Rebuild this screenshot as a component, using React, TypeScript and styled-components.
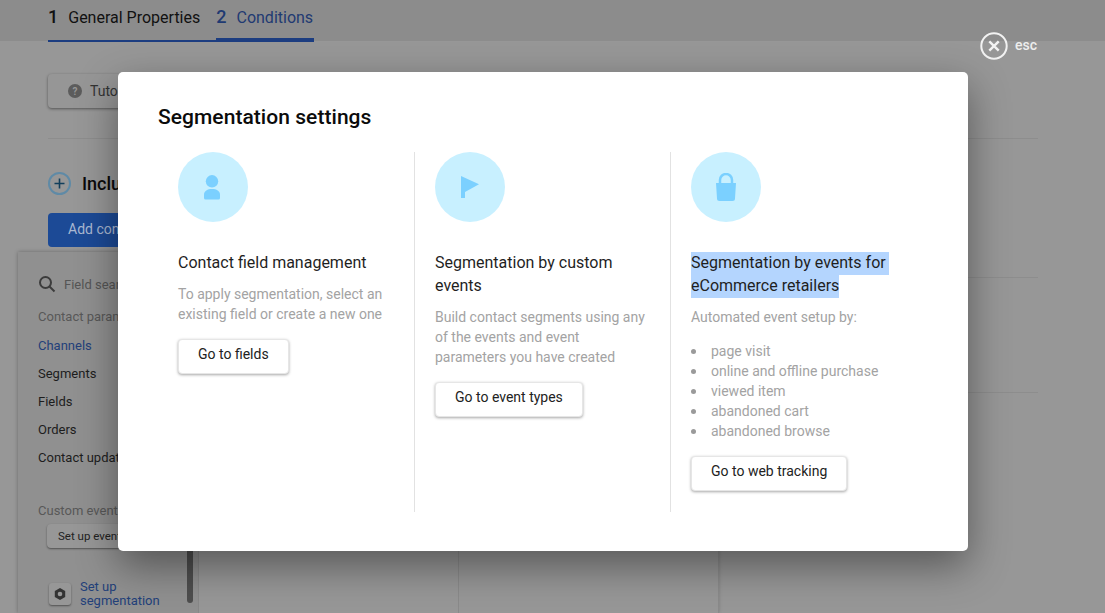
import React from "react";
import styled, { createGlobalStyle } from "styled-components";

const Global = createGlobalStyle`
  html, body { margin: 0; padding: 0; height: 100%; overflow: hidden; background: #979797; }
  body { font-family: Roboto, "Liberation Sans", sans-serif; }
  #root { height: 100%; }
`;

const Page = styled.div`
  position: relative;
  width: 1105px;
  height: 613px;
  overflow: hidden;
  background: #979797;
  color: #0e0e0e;
`;

const Header = styled.header`
  height: 41px;
  background: #8c8c8c;
  padding-left: 48px;
  box-sizing: border-box;
  display: flex;
`;

const Step = styled.div<{ $active?: boolean }>`
  height: 42px;
  box-sizing: border-box;
  display: flex;
  align-items: baseline;
  gap: 10px;
  padding-top: 5px;
  padding-right: ${(p) => (p.$active ? "1px" : "16px")};
  font-size: 16px;
  line-height: 24px;
  color: ${(p) => (p.$active ? "#1f3a72" : "#111")};
  border-bottom: ${(p) => (p.$active ? "4px" : "2px")} solid #1c3d80;
  b { font-size: 18px; font-weight: 500; }
`;

const Body = styled.main`
  padding: 33px 67px 0 48px;
`;

const Tutorial = styled.div`
  width: 140px;
  height: 34px;
  box-sizing: border-box;
  border-radius: 4px;
  background: #969696;
  box-shadow: 0 1px 3px rgba(0, 0, 0, 0.45);
  display: flex;
  align-items: center;
  gap: 8px;
  padding-left: 20px;
  font-size: 14px;
  color: #333;
`;

const Rule = styled.div`
  height: 1px;
  margin-top: 30px;
  background: #8d8d8d;
`;

const IncludeRow = styled.div`
  margin-top: 33px;
  display: flex;
  align-items: center;
  gap: 11px;
  font-size: 18px;
  font-weight: 500;
  color: #0a0a0a;
`;

const AddButton = styled.div`
  margin-top: 18px;
  width: 160px;
  height: 34px;
  border-radius: 4px;
  background: #1c4a96;
  color: #a9b8d2;
  font-size: 14px;
  display: flex;
  align-items: center;
  padding: 0 0 3px 20px;
  box-sizing: border-box;
`;

const Workspace = styled.section`
  position: absolute;
  left: 18px;
  top: 252px;
  width: 700px;
  height: 361px;
  display: flex;
  background: #979797;
  box-shadow: 0 0 4px rgba(0, 0, 0, 0.3);
`;

const Sidebar = styled.aside`
  position: relative;
  width: 180px;
  flex: none;
  box-sizing: border-box;
  padding: 23px 0 0 20px;
  background: #909090;
  font-size: 13px;
`;

const Search = styled.div`
  display: flex;
  align-items: center;
  gap: 8px;
  height: 18px;
  color: #555;
  font-size: 13px;
`;

const Muted = styled.div`
  margin-top: 15px;
  font-size: 13px;
  line-height: 18px;
  color: #585858;
`;

const NavItem = styled.div<{ $active?: boolean }>`
  margin-top: 10px;
  line-height: 18px;
  color: ${(p) => (p.$active ? "#23407a" : "#1d1d1d")};
  &:nth-child(3) { margin-top: 11px; }
`;

const EventsLabel = styled(Muted)`
  margin-top: 35px;
`;

const SetupEvents = styled.div`
  margin: 4px 0 0 9px;
  width: 110px;
  height: 24px;
  box-sizing: border-box;
  padding-left: 11px;
  display: flex;
  align-items: center;
  border-radius: 4px;
  background: #979797;
  box-shadow: 0 1px 2px rgba(0, 0, 0, 0.45);
  font-size: 11.5px;
  color: #222;
`;

const SetupRow = styled.div`
  margin: 32px 0 0 11px;
  display: flex;
  align-items: center;
  gap: 9px;
  color: #23407a;
  font-size: 13px;
  line-height: 14px;
`;

const GearBox = styled.div`
  width: 22px;
  height: 22px;
  border-radius: 3px;
  display: flex;
  align-items: center;
  justify-content: center;
  background: #979797;
  box-shadow: 0 1px 2px rgba(0, 0, 0, 0.45);
`;

const Scrollbar = styled.div`
  position: absolute;
  right: 5px;
  top: 268px;
  width: 6px;
  height: 83px;
  border-radius: 3px;
  background: #4e4e4e;
`;

const Columns = styled.div`
  flex: 1;
  display: grid;
  grid-template-columns: 260px 260px;
  border-left: 1px solid #888;
`;

const Column = styled.div`
  border-right: 1px solid #8a8a8a;
`;

const SideLine = styled.div<{ $top: number }>`
  position: absolute;
  left: 960px;
  top: ${(p) => p.$top}px;
  width: 78px;
  height: 1px;
  background: #8d8d8d;
`;

const Close = styled.div`
  position: absolute;
  left: 980px;
  top: 32px;
  display: flex;
  align-items: center;
  gap: 7px;
  color: #ededed;
  font-size: 14px;
  font-weight: 500;
`;

const CloseLabel = styled.span`
  margin-bottom: 2px;
`;

const Modal = styled.div`
  position: absolute;
  left: 118px;
  top: 72px;
  width: 850px;
  height: 479px;
  box-sizing: border-box;
  padding: 32px 40px 0;
  background: #fff;
  border-radius: 5px;
  box-shadow: 0 15px 40px rgba(0, 0, 0, 0.42);
`;

const Title = styled.h2`
  margin: 0;
  font-size: 21px;
  line-height: 26px;
  font-weight: 500;
  letter-spacing: 0.05px;
  color: #0b0b0b;
`;

const Grid = styled.div`
  margin-top: 22px;
  display: grid;
  grid-template-columns: 256px 256px 258px;
  height: 360px;
`;

const Card = styled.div<{ $first?: boolean }>`
  padding-left: 20px;
  padding-right: 20px;
  box-sizing: border-box;
  border-left: ${(p) => (p.$first ? "none" : "1px solid #e2e2e2")};
`;

const Bubble = styled.div`
  width: 70px;
  height: 70px;
  border-radius: 50%;
  background: #c8f0ff;
  display: flex;
  align-items: center;
  justify-content: center;
`;

const CardTitle = styled.h3`
  margin: 29px 0 0;
  font-size: 16px;
  line-height: 23px;
  font-weight: 400;
  color: #1f1f1f;
`;

const Selected = styled.span`
  display: block;
  position: relative;
  top: 1px;
  width: fit-content;
  height: 23px;
  line-height: 21px;
  background: #b4d5fe;
  &:first-child { padding-right: 3px; }
`;

const Desc = styled.p`
  margin: 10px 0 0;
  font-size: 14px;
  line-height: 20px;
  color: #a3a3a3;
`;

const List = styled.ul`
  margin: 14px 0 0;
  padding: 0 0 0 20px;
  list-style: none;
  font-size: 14px;
  line-height: 20px;
  color: #a3a3a3;
`;

const ListItem = styled.li`
  position: relative;
  &::before {
    content: "";
    position: absolute;
    left: -20px;
    top: 8px;
    width: 5px;
    height: 5px;
    border-radius: 50%;
    background: #9a9a9a;
  }
`;

const Action = styled.button`
  display: block;
  margin-top: 15px;
  height: 35px;
  box-sizing: border-box;
  padding: 0 19px 6px;
  border: 1px solid #e6e6e6;
  border-radius: 4px;
  background: #fff;
  box-shadow: 0 1px 3px rgba(0, 0, 0, 0.35);
  font-family: inherit;
  font-size: 14px;
  color: #222;
`;

const Icon = "#7bd0ff";

export default function App() {
  return (
    <Page>
      <Global />
      <Header>
        <Step>
          <b>1</b>
          <span>General Properties</span>
        </Step>
        <Step $active>
          <b>2</b>
          <span>Conditions</span>
        </Step>
      </Header>
      <Body>
        <Tutorial>
          <svg width="14" height="14" viewBox="0 0 14 14">
            <circle cx="7" cy="7" r="7" fill="#5c5c5c" />
            <text x="7" y="10.5" textAnchor="middle" fontSize="10" fontWeight="700" fill="#979797" fontFamily="Roboto">?</text>
          </svg>
          Tutorial
        </Tutorial>
        <Rule />
        <IncludeRow>
          <svg width="23" height="23" viewBox="0 0 23 23">
            <circle cx="11.5" cy="11.5" r="10.5" fill="none" stroke="#5f8aa6" strokeWidth="2" />
            <path d="M11.5 6.5v10M6.5 11.5h10" stroke="#123f5c" strokeWidth="1.6" />
          </svg>
          Include
        </IncludeRow>
        <AddButton>Add condition</AddButton>
      </Body>
      <SideLine $top={277} />
      <SideLine $top={392} />
      <Workspace>
        <Sidebar>
          <Search>
            <svg width="18" height="18" viewBox="0 0 18 18" fill="none" stroke="#3c3c3c" strokeWidth="2">
              <circle cx="7.5" cy="7.5" r="5.5" />
              <path d="M11.5 11.5l5 5" />
            </svg>
            Field search
          </Search>
          <Muted>Contact parameters</Muted>
          <NavItem $active>Channels</NavItem>
          <NavItem>Segments</NavItem>
          <NavItem>Fields</NavItem>
          <NavItem>Orders</NavItem>
          <NavItem>Contact updates</NavItem>
          <EventsLabel>Custom events</EventsLabel>
          <SetupEvents>Set up events</SetupEvents>
          <SetupRow>
            <GearBox>
              <svg width="14" height="14" viewBox="0 0 14 14">
                <path d="M7 1l5.2 3v6L7 13l-5.2-3V4z" fill="#333" />
                <circle cx="7" cy="7" r="2.3" fill="#979797" />
              </svg>
            </GearBox>
            <span>Set up<br />segmentation</span>
          </SetupRow>
          <Scrollbar />
        </Sidebar>
        <Columns>
          <Column />
          <Column />
        </Columns>
      </Workspace>
      <Close>
        <svg width="28" height="28" viewBox="0 0 28 28" fill="none" stroke="#f2f2f2">
          <circle cx="14" cy="14" r="12.7" strokeWidth="2" />
          <path d="M9.3 9.3l9.4 9.4M18.7 9.3l-9.4 9.4" strokeWidth="2.4" />
        </svg>
        <CloseLabel>esc</CloseLabel>
      </Close>
      <Modal>
        <Title>Segmentation settings</Title>
        <Grid>
          <Card $first>
            <Bubble>
              <svg width="18" height="25" viewBox="0 0 18 25" fill={Icon}>
                <circle cx="8" cy="6.300" r="6.200" />
                <path d="M0 23v-3.500C0 16 3.500 14 8 14s8 2 8 5.500V23a1.500 1.500 0 0 1-1.500 1.500h-13A1.500 1.500 0 0 1 0 23z" />
              </svg>
            </Bubble>
            <CardTitle>Contact field management</CardTitle>
            <Desc>To apply segmentation, select an existing field or create a new one</Desc>
            <Action>Go to fields</Action>
          </Card>
          <Card>
            <Bubble>
              <svg width="18" height="22" viewBox="0 0 18 22" fill={Icon}>
                <path d="M0 0l18 8.300L4 16v6H0z" />
              </svg>
            </Bubble>
            <CardTitle>Segmentation by custom events</CardTitle>
            <Desc>Build contact segments using any of the events and event parameters you have created</Desc>
            <Action>Go to event types</Action>
          </Card>
          <Card>
            <Bubble>
              <svg width="20" height="28" viewBox="0 0 20 28">
                <path d="M4 11V7a6 6 0 0 1 12 0v4" fill="none" stroke={Icon} strokeWidth="2.500" />
                <path d="M0 10h20l-1 15.500a2.500 2.500 0 0 1-2.500 2.500h-13A2.500 2.500 0 0 1 1 25.500z" fill={Icon} />
              </svg>
            </Bubble>
            <CardTitle>
              <Selected>Segmentation by events for</Selected>
              <Selected>eCommerce retailers</Selected>
            </CardTitle>
            <Desc>Automated event setup by:</Desc>
            <List>
              <ListItem>page visit</ListItem>
              <ListItem>online and offline purchase</ListItem>
              <ListItem>viewed item</ListItem>
              <ListItem>abandoned cart</ListItem>
              <ListItem>abandoned browse</ListItem>
            </List>
            <Action>Go to web tracking</Action>
          </Card>
        </Grid>
      </Modal>
    </Page>
  );
}
